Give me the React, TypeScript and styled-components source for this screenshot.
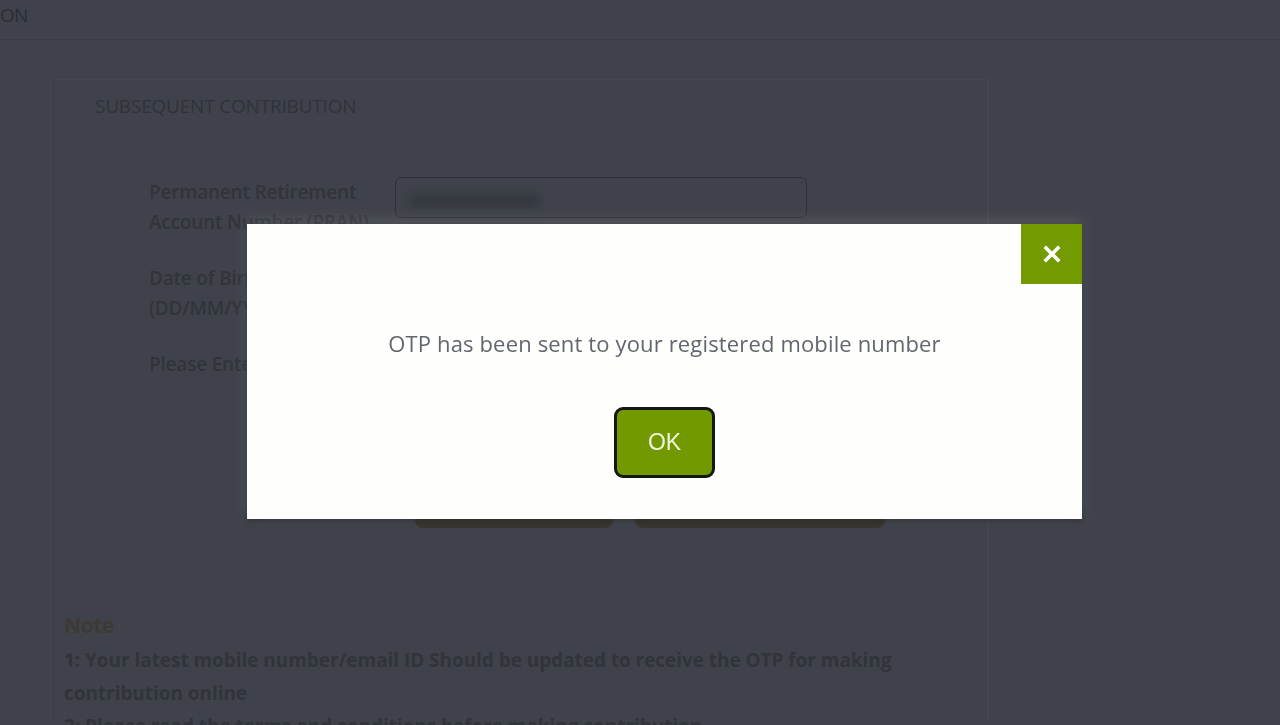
import React from "react";
import styled, { createGlobalStyle } from "styled-components";

const GlobalStyle = createGlobalStyle`
  html, body {
    margin: 0;
    padding: 0;
    background: #3f424a;
    font-family: "Open Sans", "Liberation Sans", sans-serif;
    overflow: hidden;
  }
`;

const Page = styled.div`
  width: 1280px;
  height: 725px;
  background: #3f424a;
  overflow: hidden;
`;

const TopBar = styled.header`
  height: 40px;
  box-sizing: border-box;
  padding-top: 2px;
  border-bottom: 1px solid #393c43;
  display: flex;
  align-items: flex-start;
  color: #2b2e35;
  font-size: 19px;
  letter-spacing: -0.8px;
`;

const Body = styled.main`
  padding: 39px 0 0 53px;
`;

const Card = styled.section`
  width: 924px;
  height: 640px;
  border-left: 1px solid #3a3d44;
  border-right: 2px solid #43464e;
  border-top: 1px solid #43464e;
  padding: 0 0 0 9px;
`;

const CardTitle = styled.h2`
  margin: 13px 0 0 32px;
  font-size: 19px;
  font-weight: 400;
  color: #30333a;
  letter-spacing: -0.2px;
  text-transform: uppercase;
`;

const Form = styled.div`
  margin: 58px 0 0 86px;
  display: flex;
  flex-direction: column;
  gap: 26px;
`;

const FormRow = styled.div`
  display: flex;
  align-items: flex-start;
  gap: 36px;
`;

const Label = styled.div`
  width: 210px;
  font-size: 19px;
  font-weight: 600;
  line-height: 30px;
  color: #31343b;
  letter-spacing: -0.2px;
  white-space: nowrap;
`;

const Field = styled.div`
  width: 412px;
  height: 41px;
  border: 1px solid #2e3137;
  border-radius: 6px;
  box-sizing: border-box;
  display: flex;
  align-items: center;
  padding: 6px 0 0 14px;
`;

const Masked = styled.span`
  display: block;
  width: 130px;
  height: 14px;
  background: #35383f;
  border-radius: 6px;
  filter: blur(4px);
`;

const ButtonRow = styled.div`
  display: flex;
  gap: 22px;
  margin: 109px 0 0 352px;
`;

const GhostButton = styled.div<{ $w: number }>`
  width: ${(p) => p.$w}px;
  height: 40px;
  background: #36342f;
  border-radius: 8px;
`;

const Note = styled.div`
  margin: 82px 0 0 1px;
  width: 850px;
`;

const NoteTitle = styled.div`
  font-size: 21px;
  font-weight: 700;
  color: #3c3a33;
  line-height: 30px;
  letter-spacing: -0.4px;
`;

const NoteText = styled.p`
  margin: 4px 0 0;
  font-size: 19px;
  font-weight: 700;
  line-height: 33px;
  color: #31343b;
  letter-spacing: -0.05px;
`;

const Backdrop = styled.div`
  position: fixed;
  inset: 0;
  display: flex;
  align-items: flex-start;
  padding: 224px 0 0 247px;
`;

const Modal = styled.div`
  width: 835px;
  height: 295px;
  background: #fefffd;
  box-shadow: 0 -4px 14px rgba(255, 255, 255, 0.12), 0 2px 6px rgba(0, 0, 0, 0.3);
  display: flex;
  flex-direction: column;
  align-items: center;
  position: relative;
`;

const CloseButton = styled.button`
  position: absolute;
  top: 0;
  right: 0;
  width: 61px;
  height: 60px;
  border: none;
  background: #739a00;
  display: flex;
  align-items: center;
  justify-content: center;
  padding: 0;
`;

const Message = styled.p`
  margin: 103px 0 0;
  font-size: 22px;
  line-height: 32px;
  color: #62666d;
  letter-spacing: 0.15px;
`;

const OkButton = styled.button`
  margin-top: 48px;
  width: 101px;
  height: 71px;
  box-sizing: border-box;
  background: #729a00;
  border: 3px solid #161712;
  border-radius: 9px;
  color: #eef4dc;
  font-family: "Liberation Sans", Arial, sans-serif;
  font-size: 23px;
`;

export default function App() {
  return (
    <>
      <GlobalStyle />
      <Page>
        <TopBar>ON</TopBar>
        <Body>
          <Card>
            <CardTitle>Subsequent Contribution</CardTitle>
            <Form>
              <FormRow>
                <Label>
                  Permanent Retirement
                  <br />
                  Account Number (PRAN)
                </Label>
                <Field>
                  <Masked />
                </Field>
              </FormRow>
              <FormRow>
                <Label>
                  Date of Birth
                  <br />
                  (DD/MM/YYYY)
                </Label>
              </FormRow>
              <FormRow>
                <Label>Please Enter OTP</Label>
              </FormRow>
            </Form>
            <ButtonRow>
              <GhostButton $w={198} />
              <GhostButton $w={250} />
            </ButtonRow>
            <Note>
              <NoteTitle>Note</NoteTitle>
              <NoteText>
                1: Your latest mobile number/email ID Should be updated to receive the OTP for making
                contribution online
                <br />
                2: Please read the terms and conditions before making contribution
              </NoteText>
            </Note>
          </Card>
        </Body>
      </Page>
      <Backdrop>
        <Modal>
          <CloseButton aria-label="Close">
            <svg width="18" height="18" viewBox="0 0 18 18">
              <path d="M3 3 L15 15 M15 3 L3 15" stroke="#ffffff" strokeWidth="3.6" strokeLinecap="square" />
            </svg>
          </CloseButton>
          <Message>OTP has been sent to your registered mobile number</Message>
          <OkButton>OK</OkButton>
        </Modal>
      </Backdrop>
    </>
  );
}
